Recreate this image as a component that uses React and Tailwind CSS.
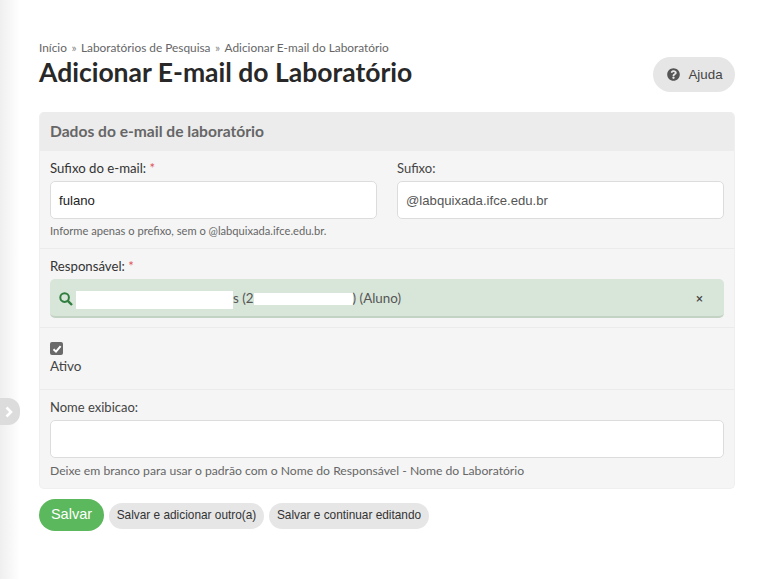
import React from 'react';

const lato = "font-['Lato','Noto_Sans',sans-serif]";

function Required() {
  return <span className="text-[#e0525c]"> *</span>;
}

function TextBox({ value, className = '' }) {
  return (
    <div className={`h-[38px] flex items-center bg-white border border-[#dcdcdc] rounded-[5px] px-2 pt-[1px] text-[13.15px] font-['Liberation_Sans',Arial,sans-serif] ${className}`}>
      {value}
    </div>
  );
}

export default function App() {
  return (
    <div className={`relative min-h-[579px] bg-white text-[#333] overflow-hidden ${lato}`}>
      {/* sidebar shadow */}
      <div className="absolute left-0 top-0 bottom-0 w-[20px] bg-gradient-to-r from-[#efefef] to-white" />
      {/* sidebar toggle */}
      <div className="absolute left-0 top-[398px] w-[20px] h-[27px] bg-[#dcdcdc] rounded-r-[12px] flex items-center pl-[4px]">
        <svg width="10" height="12" viewBox="0 0 10 12">
          <path d="M2.5 1.5 L7 6 L2.5 10.5" fill="none" stroke="#fff" strokeWidth="2.6" />
        </svg>
      </div>

      <div className="relative pl-[39px] pr-[29px] pt-[40px]">
        {/* header */}
        <div className="flex justify-between h-[72px]">
          <div>
            <div className="text-[11.85px] leading-[15px] text-[#666]">
              Início<span className="mx-[4.5px] text-[#888]">»</span>Laboratórios de Pesquisa<span className="mx-[4.5px] text-[#888]">»</span>Adicionar E-mail do Laboratório
            </div>
            <h1 className="text-[26.5px] leading-[32px] font-bold text-[#282828] mt-[1px]">Adicionar E-mail do Laboratório</h1>
          </div>
          <div className="mt-[17px] h-[35px] w-[82px] rounded-full bg-[#e6e6e6] flex items-center justify-center gap-[8px] pl-[2px] text-[13.33px] text-[#444] font-['Liberation_Sans',Arial,sans-serif]">
            <svg width="13" height="13" viewBox="0 0 512 512" fill="#555">
              <path d="M504 256c0 137-111 248-248 248S8 393 8 256 119 8 256 8s248 111 248 248zM263 90c-54 0-89 23-116 63-4 5-3 12 3 16l35 26c5 4 13 3 17-2 18-23 30-36 58-36 21 0 46 13 46 33 0 15-12 23-33 34-23 13-54 30-54 71v4c0 7 5 12 12 12h56c7 0 12-5 12-12v-1c0-29 84-30 84-107 0-58-60-101-120-101zm-7 248c-25 0-46 21-46 46s21 46 46 46 46-21 46-46-21-46-46-46z" />
            </svg>
            Ajuda
          </div>
        </div>

        {/* panel */}
        <div className="rounded-[5px] bg-[#f5f5f5] border border-[#efefef] border-t-0 overflow-hidden">
          <div className="h-[39px] bg-[#ececec] flex items-center px-[10px] pt-[1px] text-[15.6px] font-bold text-[#666]">
            Dados do e-mail de laboratório
          </div>

          <div className="h-[98px] px-[10px] pt-[9px] border-b border-[#ebebeb] text-[13px]">
            <div className="grid grid-cols-2 gap-[20px]">
              <div>
                <div className="text-[13.2px] leading-[16px] mb-[5px] text-[#333]">Sufixo do e-mail:<Required /></div>
                <TextBox value="fulano" className="text-[#222]" />
              </div>
              <div>
                <div className="leading-[16px] mb-[5px] text-[#444]">Sufixo:</div>
                <TextBox value="@labquixada.ifce.edu.br" className="text-[#555]" />
              </div>
            </div>
            <div className="text-[11.15px] leading-[15px] mt-[4px] text-[#666]">
              Informe apenas o prefixo, sem o @labquixada.ifce.edu.br.
            </div>
          </div>

          <div className="h-[79px] px-[10px] pt-[9px] border-b border-[#ebebeb] text-[13px]">
            <div className="text-[13.2px] leading-[16px] mb-[5px] text-[#333]">Responsável:<Required /></div>
            <div className="h-[39px] flex items-center bg-[#d8e5d9] border-b-2 border-[#c2d2c3] rounded-[5px] pl-[9px] pt-[2px] pr-[21px] text-[13.4px] text-[#555]">
              <svg width="14" height="14" viewBox="0 0 14 14" className="mr-[3px]">
                <circle cx="5.6" cy="5.6" r="4.3" fill="none" stroke="#2f7d3f" strokeWidth="2" />
                <path d="M8.8 8.8 L13 13" stroke="#2f7d3f" strokeWidth="2.4" />
              </svg>
              <span className="w-[157px] h-[18px] mt-[3px] bg-white" />
              <span>s (2</span>
              <span className="w-[99px] h-[12px] bg-white" />
              <span>) (Aluno)</span>
              <span className="ml-auto text-[13px] text-[#444] font-['Roboto',sans-serif]">×</span>
            </div>
          </div>

          <div className="h-[62px] px-[10px] pt-[14px] border-b border-[#ebebeb]">
            <div className="w-[13px] h-[13px] rounded-[2px] bg-[#6a6a6a] flex items-center justify-center">
              <svg width="10" height="10" viewBox="0 0 10 10">
                <path d="M1.5 5.2 L4 7.6 L8.6 2.2" fill="none" stroke="#fff" strokeWidth="2" />
              </svg>
            </div>
            <div className="text-[13.5px] leading-[18px] mt-[2px] text-[#444]">Ativo</div>
          </div>

          <div className="h-[98px] px-[10px] pt-[9px] text-[13px]">
            <div className="leading-[16px] mb-[5px] text-[#444]">Nome exibicao:</div>
            <TextBox value="" />
            <div className="text-[12.18px] leading-[15px] mt-[5px] text-[#666]">
              Deixe em branco para usar o padrão com o Nome do Responsável - Nome do Laboratório
            </div>
          </div>
        </div>

        {/* actions */}
        <div className="flex items-start gap-[5px] mt-[10px] font-['Liberation_Sans',Arial,sans-serif]">
          <button className="w-[65px] h-[32px] rounded-full bg-[#5cb85c] text-white text-[14.5px]">Salvar</button>
          <button className="w-[155px] h-[26px] mt-[4px] rounded-full bg-[#e6e6e6] text-[#333] text-[11.85px]">Salvar e adicionar outro(a)</button>
          <button className="w-[160px] h-[26px] mt-[4px] rounded-full bg-[#e6e6e6] text-[#333] text-[11.85px]">Salvar e continuar editando</button>
        </div>
      </div>
    </div>
  );
}
